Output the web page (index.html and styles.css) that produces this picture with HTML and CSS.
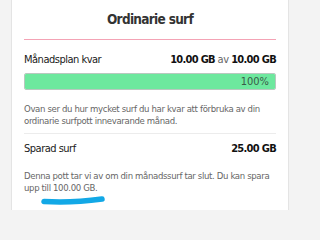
FILE: index.html
```html
<!DOCTYPE html>
<html lang="sv">
<head>
<meta charset="utf-8">
<link rel="stylesheet" href="styles.css">
</head>
<body>
<div class="card">
  <h1 class="title">Ordinarie surf</h1>
  <div class="row row-first">
    <span class="label">Månadsplan kvar</span>
    <span class="value"><b>10.00 GB</b> <span class="of">av</span> <b>10.00 GB</b></span>
  </div>
  <div class="bar"><div class="fill" style="width:100%">100%</div></div>
  <p class="desc">Ovan ser du hur mycket surf du har kvar att förbruka av din ordinarie surfpott innevarande månad.</p>
  <div class="sep"></div>
  <div class="row row-second">
    <span class="label">Sparad surf</span>
    <span class="value"><b>25.00 GB</b></span>
  </div>
  <p class="desc desc2">Denna pott tar vi av om din månadssurf tar slut. Du kan spara upp till 100.00 GB.</p>
  <svg class="scribble" width="70" height="12" viewBox="0 0 70 12">
    <path d="M4 7.5 C 20 8.5, 40 8, 62 5" fill="none" stroke="#12a8e6" stroke-width="5.5" stroke-linecap="round"/>
  </svg>
</div>
</body>
</html>
```
FILE: styles.css
```css
html {
  background: #f3f3f3;
}
body {
  margin: 0;
  padding: 0 11px;
  width: 300px;
  height: 210px;
  box-sizing: border-box;
  overflow: hidden;
  font-family: "DejaVu Sans Condensed", "DejaVu Sans", sans-serif;
  color: #1a1a1a;
}
.card {
  background: #fff;
  border-left: 1px solid #e4e4e4;
  border-right: 1px solid #e4e4e4;
  padding: 0 12px;
  height: 100%;
}
.title {
  margin: 0;
  font-size: 13.5px;
  letter-spacing: -0.7px;
  font-weight: bold;
  text-align: center;
  color: #333;
  height: 39px;
  line-height: 39px;
  border-bottom: 1px solid #f4a3b5;
}
.row {
  display: flex;
  justify-content: space-between;
  align-items: center;
  font-size: 11px;
  letter-spacing: -0.5px;
}
.row-first {
  height: 16px;
  margin-top: 11px;
  margin-bottom: 6px;
}
.value b {
  font-weight: bold;
  color: #111;
  letter-spacing: -0.7px;
}
.of {
  color: #666;
}
.bar {
  height: 15px;
  border: 1px solid #b8c8bf;
  border-radius: 2px;
  background: #f0f0f0;
  overflow: hidden;
}
.fill {
  height: 100%;
  background: #6de89e;
  color: #3a5a48;
  font-size: 11px;
  line-height: 15px;
  text-align: right;
  padding-right: 6px;
  box-sizing: border-box;
}
.desc {
  margin: 13px 0 0;
  font-size: 9.5px;
  letter-spacing: -0.35px;
  line-height: 12px;
  color: #666;
}
.sep {
  height: 1px;
  background: #ececec;
  margin-top: 6px;
}
.row-second {
  height: 16px;
  margin-top: 6px;
}
.desc2 {
  margin-top: 14px;
}
.scribble {
  display: block;
  margin: 0 0 0 16px;
}
```
